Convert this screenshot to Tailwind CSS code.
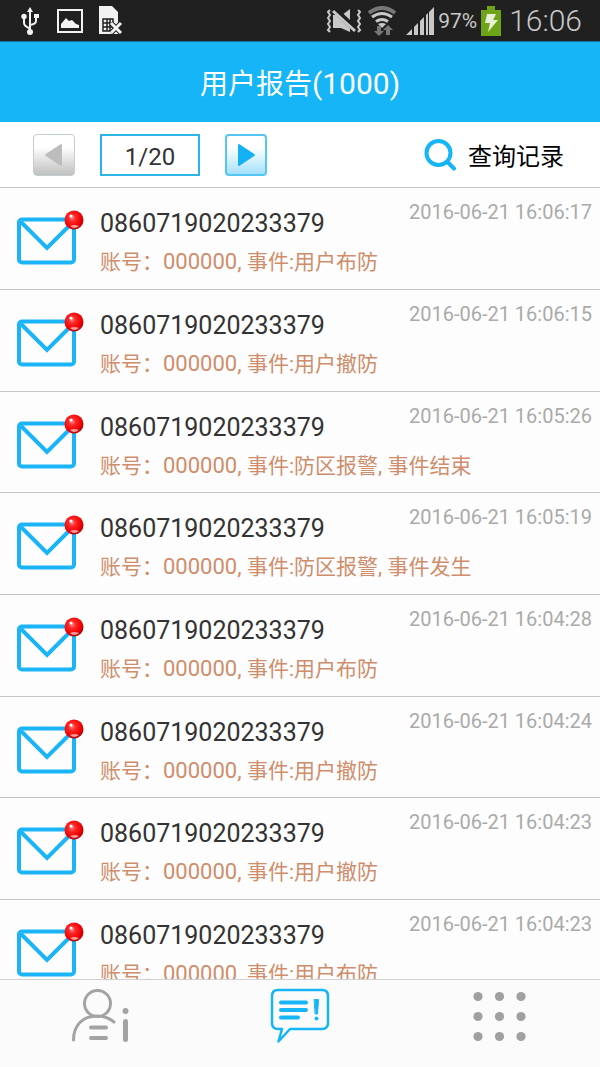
<!DOCTYPE html>
<html lang="zh-CN">

<head>
  <meta charset="UTF-8" />
  <meta name="viewport" content="width=device-width, initial-scale=1.0" />
  <title>用户报告</title>
  <script src="https://cdn.jsdelivr.net/npm/@tailwindcss/browser@4"></script>
</head>

<body class="h-screen flex flex-col overflow-hidden bg-[#fdfdfd] text-[#333] font-[Roboto,'Noto_Sans_CJK_SC',sans-serif]">
  <!-- Shared mail icon (not display:none, the gradient would be lost) -->
  <svg class="absolute size-0">
    <defs>
      <radialGradient id="dot" cx="0.4" cy="0.38" r="0.62">
        <stop offset="0" stop-color="#ff8a8a" />
        <stop offset="0.3" stop-color="#fa2a2a" />
        <stop offset="0.75" stop-color="#f40000" />
        <stop offset="1" stop-color="#b80008" />
      </radialGradient>
    </defs>
    <symbol id="mail" viewBox="0 0 70 56">
      <rect x="3" y="10.500" width="55" height="43" rx="3" fill="none" stroke="#1bb5f7" stroke-width="4" />
      <path d="M5 13 31 39 56 14" fill="none" stroke="#1bb5f7" stroke-width="4" />
      <circle cx="58" cy="11" r="9.500" fill="url(#dot)" />
      <circle cx="55" cy="7" r="1.600" fill="#fff" />
      <path d="M54 17q4-2 9 0-5 4-9 0z" fill="#ff9a9a" />
    </symbol>
  </svg>

  <!-- Status bar -->
  <div class="h-[41px] shrink-0 bg-[#202020] text-[#c8c8c8] flex items-center justify-between pl-5 pr-[18px]">
    <div class="flex items-center">
      <svg class="w-5 h-[30px]" viewBox="0 0 20 30" fill="none" stroke="#f2f2f2" stroke-width="2">
        <path d="M10 5v20M10 22.500Q4 20 4 17v-6M10 19q6-1 6-4v-4" />
        <path d="M10 1 13 6H7z" fill="#f2f2f2" stroke="none" />
        <circle cx="10" cy="26" r="3" fill="#f2f2f2" stroke="none" />
        <circle cx="4" cy="10.500" r="2.700" fill="#f2f2f2" stroke="none" />
        <path d="M14 8h5v4h-5z" fill="#f2f2f2" stroke="none" />
      </svg>
      <svg class="w-7 h-[30px] ml-4" viewBox="0 0 28 30">
        <rect x="2" y="4" width="24" height="22" fill="none" stroke="#f2f2f2" stroke-width="2" />
        <path d="M5 22v-4l5-6 3 3 3-1 4 4 3 1v3z" fill="#f2f2f2" />
      </svg>
      <svg class="w-7 h-[30px] ml-[13px]" viewBox="0 0 28 30">
        <path d="M2 0h13l6 6v22H2z" fill="#f2f2f2" />
        <path d="M6 13h10v12H6zM10 13v12M13 13v12M6 17h10M6 21h10" fill="none" stroke="#202020" stroke-width="1.500" />
        <path d="m14 17 10 10M24 17 14 27" stroke="#202020" stroke-width="5" />
        <path d="m14 17 10 10M24 17 14 27" stroke="#f2f2f2" stroke-width="3" />
      </svg>
    </div>
    <div class="flex items-center">
      <svg class="w-9 h-[30px]" viewBox="0 0 36 30" fill="none" stroke="#c8c8c8">
        <path d="m4 4-2 2 2 3-2 3 2 3-2 3 2 3-2 3 2 2M32 4l2 2-2 3 2 3-2 3 2 3-2 3 2 3-2 2" stroke-width="2" />
        <path d="M7 9v13h8l9 4V3l-8 6z" fill="#c8c8c8" stroke="none" />
        <path d="m8 3 21 20" stroke="#202020" stroke-width="6" />
        <path d="m7 5 22 20" stroke-width="3" />
      </svg>
      <svg class="w-[30px] h-[30px] ml-[6px]" viewBox="0 0 30 30" fill="none" stroke-width="3">
        <path d="M1 7q13-10 26 0" stroke="#777" stroke-width="4" />
        <path d="M4 11q10-7 20 0M8 15.500q6-4 12 0" stroke="#c8c8c8" />
        <path d="m10 18q4-2 8 0l-4 4z" fill="#c8c8c8" />
        <path d="M11 20v6M20 29v-6" stroke="#777" stroke-width="4" />
        <path d="M6 25h10l-5 5zM15 24l5-5 5 5z" fill="#777" />
      </svg>
      <svg class="w-7 h-[30px] ml-2" viewBox="0 0 28 30" fill="#c8c8c8">
        <path d="M0 29l6-6v6zM8 21l4-4v12H8zM14 15l4-4v18h-4zM20 9l2-2v22h-2zM23 6l5-5v28h-5z" />
      </svg>
      <span class="ml-1 text-[21px] leading-6">97%</span>
      <svg class="w-5 h-[30px] ml-1" viewBox="0 0 20 30">
        <path d="M0 4h6V0h8v4h6v26H0z" fill="#6fa318" />
        <path d="M6 8h9l-3 6h5L7 26l2-9H4z" fill="#e8f0d8" />
      </svg>
      <span class="ml-2 text-[30px] leading-8 font-light">16:06</span>
    </div>
  </div>

  <!-- Header -->
  <header class="h-[81px] shrink-0 bg-[#15b5f7] border-t border-[#12759f] flex items-center justify-center pt-1 text-white">
    <h1 class="text-[28px] leading-10">用户报告<span class="text-[30px]">(1000)</span></h1>
  </header>

  <!-- Pager + search -->
  <div class="h-[66px] shrink-0 flex items-center pl-[33px] pr-9 border-b border-[#c4c4c4] bg-white">
    <button type="button" disabled aria-label="上一页" class="size-[42px] rounded border border-[#c4cdd2] bg-linear-to-b from-white from-30% to-[#c0c0c0] flex items-center justify-center">
      <svg class="size-7" viewBox="0 0 28 28"><path d="M21 4v20L6 14z" fill="#bdbdbd" stroke="#bdbdbd" stroke-width="2" stroke-linejoin="round" /></svg>
    </button>
    <input type="text" value="1/20" aria-label="页码" class="ml-[25px] w-[100px] h-[42px] pt-1 border-2 border-[#2cb4e8] text-center text-[24px]" />
    <button type="button" aria-label="下一页" class="ml-[25px] size-[42px] rounded border-2 border-[#55c5f5] bg-linear-to-b from-white from-30% to-[#a3e1fc] flex items-center justify-center">
      <svg class="size-7" viewBox="0 0 28 28"><path d="M7 4v20l15-10z" fill="#15b1f5" stroke="#15b1f5" stroke-width="2" stroke-linejoin="round" /></svg>
    </button>
    <button type="button" class="ml-auto flex items-center gap-3 text-[24px] leading-8 text-black">
      <svg class="size-8" viewBox="0 0 32 32" fill="none" stroke="#15b5f7" stroke-width="4" stroke-linecap="round">
        <circle cx="14.500" cy="14" r="12" />
        <path d="m23.500 23 6.500 6.500" />
      </svg>
      <span class="pt-1">查询记录</span>
    </button>
  </div>

  <!-- Reports -->
  <ul class="flex-1 min-h-0 overflow-hidden">
    <li class="h-[102px] nth-[3n]:h-[101px] flex items-start border-b border-[#c8c4c4] pl-4 pr-2">
      <svg class="w-[70px] h-14 mt-[21px] shrink-0"><use href="#mail" /></svg>
      <div class="ml-[14px] pt-[21px] flex-1 whitespace-nowrap">
        <h2 class="text-[25px] leading-[30px]">0860719020233379</h2>
        <p class="mt-[10px] text-[21px] leading-[26px] text-[#cf8d6b]">账号：<span class="text-[22px]">000000, </span>事件:用户布防</p>
      </div>
      <time class="pt-3 w-0 flex justify-end whitespace-nowrap text-[20px] leading-6 text-[#aaa]">2016-06-21 16:06:17</time>
    </li>
    <li class="h-[102px] nth-[3n]:h-[101px] flex items-start border-b border-[#c8c4c4] pl-4 pr-2">
      <svg class="w-[70px] h-14 mt-[21px] shrink-0"><use href="#mail" /></svg>
      <div class="ml-[14px] pt-[21px] flex-1 whitespace-nowrap">
        <h2 class="text-[25px] leading-[30px]">0860719020233379</h2>
        <p class="mt-[10px] text-[21px] leading-[26px] text-[#cf8d6b]">账号：<span class="text-[22px]">000000, </span>事件:用户撤防</p>
      </div>
      <time class="pt-3 w-0 flex justify-end whitespace-nowrap text-[20px] leading-6 text-[#aaa]">2016-06-21 16:06:15</time>
    </li>
    <li class="h-[102px] nth-[3n]:h-[101px] flex items-start border-b border-[#c8c4c4] pl-4 pr-2">
      <svg class="w-[70px] h-14 mt-[21px] shrink-0"><use href="#mail" /></svg>
      <div class="ml-[14px] pt-[21px] flex-1 whitespace-nowrap">
        <h2 class="text-[25px] leading-[30px]">0860719020233379</h2>
        <p class="mt-[10px] text-[21px] leading-[26px] text-[#cf8d6b]">账号：<span class="text-[22px]">000000, </span>事件:防区报警, 事件结束</p>
      </div>
      <time class="pt-3 w-0 flex justify-end whitespace-nowrap text-[20px] leading-6 text-[#aaa]">2016-06-21 16:05:26</time>
    </li>
    <li class="h-[102px] nth-[3n]:h-[101px] flex items-start border-b border-[#c8c4c4] pl-4 pr-2">
      <svg class="w-[70px] h-14 mt-[21px] shrink-0"><use href="#mail" /></svg>
      <div class="ml-[14px] pt-[21px] flex-1 whitespace-nowrap">
        <h2 class="text-[25px] leading-[30px]">0860719020233379</h2>
        <p class="mt-[10px] text-[21px] leading-[26px] text-[#cf8d6b]">账号：<span class="text-[22px]">000000, </span>事件:防区报警, 事件发生</p>
      </div>
      <time class="pt-3 w-0 flex justify-end whitespace-nowrap text-[20px] leading-6 text-[#aaa]">2016-06-21 16:05:19</time>
    </li>
    <li class="h-[102px] nth-[3n]:h-[101px] flex items-start border-b border-[#c8c4c4] pl-4 pr-2">
      <svg class="w-[70px] h-14 mt-[21px] shrink-0"><use href="#mail" /></svg>
      <div class="ml-[14px] pt-[21px] flex-1 whitespace-nowrap">
        <h2 class="text-[25px] leading-[30px]">0860719020233379</h2>
        <p class="mt-[10px] text-[21px] leading-[26px] text-[#cf8d6b]">账号：<span class="text-[22px]">000000, </span>事件:用户布防</p>
      </div>
      <time class="pt-3 w-0 flex justify-end whitespace-nowrap text-[20px] leading-6 text-[#aaa]">2016-06-21 16:04:28</time>
    </li>
    <li class="h-[102px] nth-[3n]:h-[101px] flex items-start border-b border-[#c8c4c4] pl-4 pr-2">
      <svg class="w-[70px] h-14 mt-[21px] shrink-0"><use href="#mail" /></svg>
      <div class="ml-[14px] pt-[21px] flex-1 whitespace-nowrap">
        <h2 class="text-[25px] leading-[30px]">0860719020233379</h2>
        <p class="mt-[10px] text-[21px] leading-[26px] text-[#cf8d6b]">账号：<span class="text-[22px]">000000, </span>事件:用户撤防</p>
      </div>
      <time class="pt-3 w-0 flex justify-end whitespace-nowrap text-[20px] leading-6 text-[#aaa]">2016-06-21 16:04:24</time>
    </li>
    <li class="h-[102px] nth-[3n]:h-[101px] flex items-start border-b border-[#c8c4c4] pl-4 pr-2">
      <svg class="w-[70px] h-14 mt-[21px] shrink-0"><use href="#mail" /></svg>
      <div class="ml-[14px] pt-[21px] flex-1 whitespace-nowrap">
        <h2 class="text-[25px] leading-[30px]">0860719020233379</h2>
        <p class="mt-[10px] text-[21px] leading-[26px] text-[#cf8d6b]">账号：<span class="text-[22px]">000000, </span>事件:用户撤防</p>
      </div>
      <time class="pt-3 w-0 flex justify-end whitespace-nowrap text-[20px] leading-6 text-[#aaa]">2016-06-21 16:04:23</time>
    </li>
    <li class="h-[102px] nth-[3n]:h-[101px] flex items-start border-b border-[#c8c4c4] pl-4 pr-2">
      <svg class="w-[70px] h-14 mt-[21px] shrink-0"><use href="#mail" /></svg>
      <div class="ml-[14px] pt-[21px] flex-1 whitespace-nowrap">
        <h2 class="text-[25px] leading-[30px]">0860719020233379</h2>
        <p class="mt-[10px] text-[21px] leading-[26px] text-[#cf8d6b]">账号：<span class="text-[22px]">000000, </span>事件:用户布防</p>
      </div>
      <time class="pt-3 w-0 flex justify-end whitespace-nowrap text-[20px] leading-6 text-[#aaa]">2016-06-21 16:04:23</time>
    </li>
  </ul>

  <!-- Bottom tabs -->
  <nav class="h-[88px] shrink-0 grid grid-cols-3 border-t border-[#d0d0d0] bg-[#fbfbfb]">
    <a href="#" aria-label="用户" class="flex justify-center pt-2">
      <svg class="w-[60px] h-14" viewBox="0 0 60 56" fill="none" stroke="#a3a3a3" stroke-width="3" stroke-linecap="round">
        <circle cx="27.500" cy="15.500" r="13" />
        <path d="M3.500 52C3.500 38 12 28 27 28q10 0 17 6" />
        <path d="M21 39.500h15M21 50h15" stroke-width="4" />
        <path d="M55.500 33.500v18" stroke-width="5" />
        <circle cx="55.500" cy="23" r="3" fill="#a3a3a3" stroke="none" />
      </svg>
    </a>
    <a href="#" aria-label="报告" class="flex justify-center pt-2">
      <svg class="w-[60px] h-14" viewBox="0 0 60 56" fill="none" stroke="#15b5f7" stroke-width="2.500" stroke-linecap="round" stroke-linejoin="round">
        <path d="M8 2h44q6 0 6 6v27q0 6-6 6H20L8.500 53.500 12 41H8q-6 0-6-6V8q0-6 6-6z" />
        <path d="M11 14.500h25M11 22h25M11 29.500h17" stroke-width="4" />
        <path d="M44.500 11.500h4L47.500 26h-2z" fill="#15b5f7" stroke-width="1" />
        <circle cx="46.500" cy="30.500" r="2" fill="#15b5f7" stroke="none" />
      </svg>
    </a>
    <a href="#" aria-label="更多" class="flex justify-center pt-2">
      <svg class="w-[60px] h-14" viewBox="0 0 60 56" fill="#a0a0a0">
        <circle cx="8" cy="8.500" r="4.600" /><circle cx="29.500" cy="8.500" r="4.600" /><circle cx="51" cy="8.500" r="4.600" />
        <circle cx="8" cy="28.500" r="4.600" /><circle cx="29.500" cy="28.500" r="4.600" /><circle cx="51" cy="28.500" r="4.600" />
        <circle cx="8" cy="48.500" r="4.600" /><circle cx="29.500" cy="48.500" r="4.600" /><circle cx="51" cy="48.500" r="4.600" />
      </svg>
    </a>
  </nav>
</body>

</html>
